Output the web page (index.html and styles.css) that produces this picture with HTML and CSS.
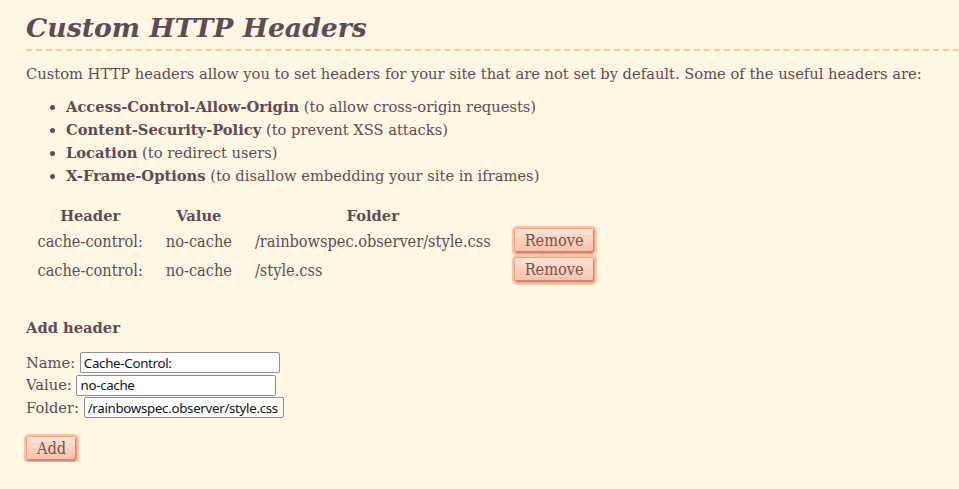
FILE: index.html
```html
<!DOCTYPE html>
<html lang="en">
<head>
  <meta charset="UTF-8">
  <meta name="viewport" content="width=device-width, initial-scale=1.0">
  <title>Custom HTTP Headers</title>
  <link rel="stylesheet" href="styles.css">
</head>
<body>
  <div class="content">
    <h1>Custom HTTP Headers</h1>

    <p class="intro">Custom HTTP headers allow you to set headers for your site that are not set by default. Some of the useful headers are:</p>

    <ul class="header-list">
      <li><strong>Access-Control-Allow-Origin</strong> (to allow cross-origin requests)</li>
      <li><strong>Content-Security-Policy</strong> (to prevent XSS attacks)</li>
      <li><strong>Location</strong> (to redirect users)</li>
      <li><strong>X-Frame-Options</strong> (to disallow embedding your site in iframes)</li>
    </ul>

    <table class="headers-table">
      <tr>
        <th>Header</th>
        <th>Value</th>
        <th>Folder</th>
        <th></th>
      </tr>
      <tr>
        <td>cache-control:</td>
        <td>no-cache</td>
        <td>/rainbowspec.observer/style.css</td>
        <td><button type="button" class="btn">Remove</button></td>
      </tr>
      <tr>
        <td>cache-control:</td>
        <td>no-cache</td>
        <td>/style.css</td>
        <td><button type="button" class="btn">Remove</button></td>
      </tr>
    </table>

    <form id="addHeaderForm" class="add-form">
      <h3>Add header</h3>
      <label for="name">Name:</label>
      <input type="text" id="name" name="name" value="Cache-Control:"><br>
      <label for="value">Value:</label>
      <input type="text" id="value" name="value" value="no-cache"><br>
      <label for="folder">Folder:</label>
      <input type="text" id="folder" name="folder" value="/rainbowspec.observer/style.css"><br>

      <button type="button" class="btn add-btn">Add</button>
    </form>
  </div>
</body>
</html>
```

FILE: styles.css
```css
body {
  margin: 0;
  background-color: #fef7e4;
  color: #5f4b55;
  font-family: "DejaVu Serif", serif;
  font-size: 14.7px;
}
.content {
  padding: 12px 0 0 26px;
}
h1 {
  margin: 0;
  padding-bottom: 6px;
  font-size: 26.7px;
  font-style: italic;
  font-weight: bold;
  border-bottom: 2px dashed #ffc4a2;
}
.intro {
  margin: 14px 0 13px;
}
.header-list {
  margin: 0;
  padding-left: 40px;
  line-height: 23px;
}
.headers-table {
  margin-top: 20px;
  border-collapse: collapse;
}
th {
  padding: 0 11.5px 2.5px;
  text-align: center;
}
td {
  padding: 1.5px 11.5px;
  font-family: "DejaVu Serif Condensed", "DejaVu Serif", serif;
  font-stretch: condensed;
  font-size: 16.2px;
  text-align: left;
}
.btn {
  font-family: "DejaVu Serif Condensed", "DejaVu Serif", serif;
  font-stretch: condensed;
  font-size: 16.2px;
  color: #6e5550;
  padding: 2px 10px 3px;
  border: 1px solid #e9a48c;
  border-radius: 3px;
  background: linear-gradient(#ffe3d4, #fbbda6);
  box-shadow: 0 0 0 2px #ffc3a0, inset -1px -2px 0 #c48c7c;
  cursor: pointer;
}
.add-form h3 {
  margin: 34px 0 16px;
  font-size: 14.7px;
}
.add-form label {
  line-height: 22.5px;
}
.add-form input {
  width: 200px;
  height: 21px;
  box-sizing: border-box;
  padding: 0 3px;
  font-family: "Noto Sans", "DejaVu Sans", sans-serif;
  font-size: 13.3px;
  letter-spacing: -0.3px;
  color: #111;
  border: 1px solid #8e8a98;
  border-radius: 2px;
  background: #fff;
  vertical-align: baseline;
}
.add-btn {
  margin-top: 17px;
}
```
